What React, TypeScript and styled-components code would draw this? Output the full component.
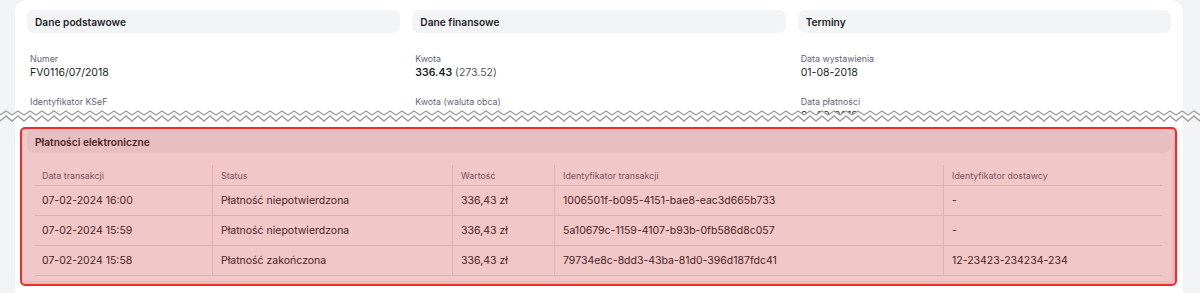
import React from 'react';
import styled, { createGlobalStyle } from 'styled-components';

type Field = { label: string; value: string; extra?: string };
type Group = { title: string; fields: Field[] };
type Payment = { date: string; status: string; amount: string; txId: string; providerId: string };

const groups: Group[] = [
    {
        title: 'Dane podstawowe',
        fields: [
            { label: 'Numer', value: 'FV0116/07/2018' },
            { label: 'Identyfikator KSeF', value: '-' },
        ],
    },
    {
        title: 'Dane finansowe',
        fields: [
            { label: 'Kwota', value: '336.43', extra: '(273.52)' },
            { label: 'Kwota (waluta obca)', value: '' },
        ],
    },
    {
        title: 'Terminy',
        fields: [
            { label: 'Data wystawienia', value: '01-08-2018' },
            { label: 'Data płatności', value: '01-09-2018' },
        ],
    },
];

const payments: Payment[] = [
    { date: '07-02-2024 16:00', status: 'Płatność niepotwierdzona', amount: '336,43 zł', txId: '1006501f-b095-4151-bae8-eac3d665b733', providerId: '-' },
    { date: '07-02-2024 15:59', status: 'Płatność niepotwierdzona', amount: '336,43 zł', txId: '5a10679c-1159-4107-b93b-0fb586d8c057', providerId: '-' },
    { date: '07-02-2024 15:58', status: 'Płatność zakończona', amount: '336,43 zł', txId: '79734e8c-8dd3-43ba-81d0-396d187fdc41', providerId: '12-23423-234234-234' },
];

const columns = ['Data transakcji', 'Status', 'Wartość', 'Identyfikator transakcji', 'Identyfikator dostawcy'];

// zygzak "urwanej" kartki
const TearLine: React.FC = () => {
    const w = 1200;
    const step = 12;
    const upper: string[] = [];
    const lower: string[] = [];
    for (let x = 0, i = 0; x <= w + step; x += step / 2, i++) {
        upper.push(`${x},${i % 2 === 0 ? 5 : 1}`);
        lower.push(`${x},${i % 2 === 0 ? 11 : 6}`);
    }
    const fill = `M${upper.join(' L')} L${[...lower].reverse().join(' L')} Z`;
    return (
        <Tear width={w} height={14} viewBox={`0 0 ${w} 14`}>
            <path d={fill} fill="#ffffff" />
            <polyline points={upper.join(' ')} fill="none" stroke="#9e9ea4" strokeWidth={1.4} />
            <polyline points={lower.join(' ')} fill="none" stroke="#9e9ea4" strokeWidth={1.4} />
        </Tear>
    );
};

const App: React.FC = () => {
    return (
        <>
            <GlobalStyle />
            <Page>
                <Card>
                    <TopArea>
                        {groups.map((g) => (
                            <Column key={g.title}>
                                <SectionTitle>{g.title}</SectionTitle>
                                <Fields>
                                    {g.fields.map((f) => (
                                        <FieldBox key={f.label}>
                                            <Label>{f.label}</Label>
                                            {f.extra ? (
                                                <Value>
                                                    <strong>{f.value}</strong> <Muted>{f.extra}</Muted>
                                                </Value>
                                            ) : (
                                                <Value>{f.value}</Value>
                                            )}
                                        </FieldBox>
                                    ))}
                                </Fields>
                            </Column>
                        ))}
                    </TopArea>
                    <Highlight>
                        <SectionTitle>Płatności elektroniczne</SectionTitle>
                        <Table>
                            <Row $head>
                                {columns.map((c) => (
                                    <HeadCell key={c}>{c}</HeadCell>
                                ))}
                            </Row>
                            {payments.map((p) => (
                                <Row key={p.txId}>
                                    <Cell>{p.date}</Cell>
                                    <Cell>{p.status}</Cell>
                                    <Cell>{p.amount}</Cell>
                                    <Cell>{p.txId}</Cell>
                                    <Cell>{p.providerId}</Cell>
                                </Row>
                            ))}
                        </Table>
                    </Highlight>
                </Card>
                <TearLine />
            </Page>
        </>
    );
};

const GlobalStyle = createGlobalStyle`
    * {
        box-sizing: border-box;
    }

    body {
        margin: 0;
        background: #f2f3f5;
        font-family: Inter, "Noto Sans", sans-serif;
        color: #211e27;
    }`
;

const Page = styled.div`
    position: relative;
    height: 293px;
    overflow: hidden;
    padding: 0 17px 0 15px;`
;

const Card = styled.div`
    background: #ffffff;
    border-radius: 12px 12px 0 0;
    height: 100%;
    padding: 10px 12px 0;`
;

const TopArea = styled.div`
    display: grid;
    grid-template-columns: repeat(3, 1fr);
    gap: 12px;
    height: 107px;
    overflow: hidden;`
;

const Column = styled.div`
    display: flex;
    flex-direction: column;`
;

const SectionTitle = styled.div`
    height: 23px;
    display: flex;
    align-items: center;
    padding: 0 8px;
    background: #f3f4f6;
    border-radius: 7px;
    font-size: 10.2px;
    font-weight: 600;
    color: #231f29;`
;

const Fields = styled.div`
    display: flex;
    flex-direction: column;
    gap: 15px;
    padding: 19px 3px 0;`
;

const FieldBox = styled.div`
    display: flex;
    flex-direction: column;`
;

const Label = styled.span`
    font-size: 8.85px;
    line-height: 13px;
    color: #67647a;`
;

const Value = styled.span`
    font-size: 10.5px;
    line-height: 15px;
    min-height: 15px;
    color: #211e27;

    strong {
        font-weight: 600;
    }`
;

const Muted = styled.span`
    color: #55525f;`
;

const Tear = styled.svg`
    position: absolute;
    left: 0;
    top: 110px;
    display: block;`
;

// Czerwone zaznaczenie sekcji
const Highlight = styled.section`
    position: relative;
    margin: 10px -6px 0 -7px;
    padding: 3px 6px 10px 7px;

    &::after {
        content: '';
        position: absolute;
        inset: 0;
        border: 2px solid #f02b2b;
        border-radius: 5px;
        background: rgba(200, 30, 30, 0.25);
        box-shadow: inset -2px -2px 3px rgba(150, 40, 40, 0.12);
        pointer-events: none;
    }`
;

const Table = styled.div`
    margin: 12px 9px 0 8px;`
;

const Row = styled.div<{ $head?: boolean }>`
    display: grid;
    grid-template-columns: 177px 240px 102px 389px 1fr;
    height: ${(p) => (p.$head ? '21px' : '30px')};
    border-bottom: 1px solid #e5e3e8;`
;

const HeadCell = styled.div`
    display: flex;
    align-items: center;
    padding-left: 8px;
    font-size: 8.85px;
    color: #67647a;

    & + & {
        border-left: 1px solid #e5e3e8;
    }

    &:first-child {
        padding-left: 7px;
    }`
;

const Cell = styled(HeadCell)`
    font-size: 10.5px;
    color: #211e27;`
;

export default App;
